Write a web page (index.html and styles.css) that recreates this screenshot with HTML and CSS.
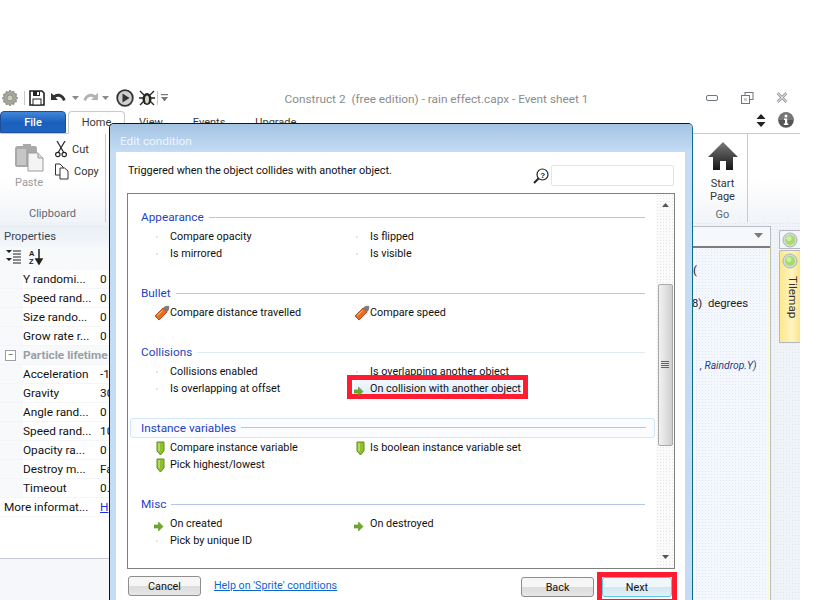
FILE: index.html
```html
<!DOCTYPE html>
<html lang="en">
<head>
<meta charset="utf-8">
<title>Construct 2</title>
<link rel="stylesheet" href="styles.css">
</head>
<body>
<svg class="defs" width="0" height="0" aria-hidden="true">
  <symbol id="dot" viewBox="0 0 16 16"><rect x="2" y="7" width="2" height="2" fill="#e4e4e4"/></symbol>
  <symbol id="bullet" viewBox="0 0 16 16">
    <path d="M1 11 L9 3 L13 7 L5 15 Z" fill="#e8701c" stroke="#c2451a" stroke-width="1"/>
    <path d="M9 3 Q11.500 0 15 1 Q16 4.500 13 7 Z" fill="#7d7d7d"/>
    <path d="M3.500 10.500 L8.500 5.500" stroke="#f7c58a" stroke-width="1"/>
  </symbol>
  <symbol id="shield" viewBox="0 0 16 16">
    <path d="M1 1 H8 V10 L4.500 14 L1 10 Z" fill="#8fbf2f" stroke="#5e8f1c" stroke-width="1"/>
    <path d="M3 2 V10" stroke="#c4e26e" stroke-width="1.500"/>
  </symbol>
  <symbol id="arrow" viewBox="0 0 16 16">
    <path d="M0 6 H4.500 V3 L9 7.500 L4.500 12 V9 H0 Z" fill="#6fa82a" stroke="#5a8d1f" stroke-width=".6"/>
  </symbol>
  <symbol id="led" viewBox="0 0 16 16">
    <circle cx="8" cy="8" r="7" fill="#d3dcd9" stroke="#aab4b4"/>
    <circle cx="8" cy="8" r="5" fill="#a6dc6a"/>
    <circle cx="7" cy="6.500" r="2.500" fill="#cdf0a5"/>
  </symbol>
</svg>

<div class="app">
  <header class="titlebar">
    <div class="qat">
      <svg class="q-gear" width="18" height="18" viewBox="0 0 18 18"><path d="M9 1l1.500 2 2.300-.8.500 2.400 2.400.5-.8 2.300 2 1.500-2 1.500.8 2.300-2.400.5-.5 2.400-2.300-.8L9 17l-1.500-2-2.300.8-.5-2.400-2.400-.5.8-2.300-2-1.500 2-1.500-.8-2.300 2.400-.5.500-2.400 2.300.8z" fill="#a3a89c" stroke="#77796f" stroke-width=".7"/><circle cx="9" cy="9" r="3" fill="#c9ccbf" stroke="#85877c" stroke-width=".7"/></svg>
      <span class="q-sep"></span>
      <svg class="q-save" width="16" height="16" viewBox="0 0 16 16"><path d="M1 1 H13 L15 3 V15 H1 Z" fill="#fff" stroke="#222" stroke-width="1.600"/><rect x="4" y="1" width="7" height="5" fill="#222"/><rect x="8" y="2" width="2" height="3" fill="#fff"/><rect x="4" y="9" width="8" height="6" fill="#fff" stroke="#222"/></svg>
      <svg class="q-undo" width="16" height="12" viewBox="0 0 16 12"><path d="M1 1 V8 H8 L5.500 5.500 C8 4 11.500 4.500 13 9 L15.500 8 C14 2.500 8.500 0 3.800 3.200 Z" fill="#333"/></svg>
      <svg class="q-caret" width="7" height="4" viewBox="0 0 7 4"><path d="M0 0 H7 L3.500 4 Z" fill="#8a8a8a"/></svg>
      <svg class="q-redo" width="16" height="12" viewBox="0 0 16 12"><path d="M15 1 V8 H8 L10.500 5.500 C8 4 4.500 4.500 3 9 L.5 8 C2 2.500 7.500 0 12.200 3.200 Z" fill="#b4b4b4"/></svg>
      <svg class="q-caret2" width="7" height="4" viewBox="0 0 7 4"><path d="M0 0 H7 L3.500 4 Z" fill="#8a8a8a"/></svg>
      <svg class="q-play" width="18" height="18" viewBox="0 0 18 18"><circle cx="9" cy="9" r="7.800" fill="#cfcfcf" stroke="#333" stroke-width="1.800"/><path d="M6.500 4.500 L13.500 9 L6.500 13.500 Z" fill="#333"/></svg>
      <svg class="q-bug" width="18" height="18" viewBox="0 0 18 18"><path d="M2 2l4 4M16 2l-4 4M1 9h16M2 16l4-4M16 16l-4-4" stroke="#222" stroke-width="1.300"/><ellipse cx="9" cy="10" rx="4.500" ry="6" fill="#222"/><ellipse cx="9" cy="10.500" rx="2" ry="4" fill="#d8d8c0"/></svg>
      <span class="q-sep q-sep-b"></span>
      <svg class="q-more" width="7" height="8" viewBox="0 0 7 8"><rect y="0" width="7" height="1.200" fill="#777"/><path d="M0 3 H7 L3.500 7.500 Z" fill="#777"/></svg>
    </div>
    <div class="wintitle">Construct 2&nbsp; (free edition) - rain effect.capx - Event sheet 1</div>
    <div class="winctl">
      <svg width="12" height="8" viewBox="0 0 12 8"><rect x=".5" y="1.500" width="11" height="5" rx="1.500" fill="#fff" stroke="#6d7580"/></svg>
      <svg width="13" height="12" viewBox="0 0 13 12"><rect x="4" y=".5" width="8" height="7" fill="#fff" stroke="#6d7580"/><rect x=".5" y="3.500" width="8" height="8" fill="#fff" stroke="#6d7580"/><rect x="3" y="6" width="3" height="3" fill="#c8ccd2"/></svg>
      <svg width="12" height="11" viewBox="0 0 12 11"><path d="M1.500 1 L10.500 10 M10.500 1 L1.500 10" stroke="#8f96a0" stroke-width="2.600"/><path d="M1.500 1 L10.500 10 M10.500 1 L1.500 10" stroke="#fff" stroke-width="1"/></svg>
    </div>
  </header>

  <nav class="tabs">
    <div class="tab tab-file">File</div>
    <div class="tab tab-home">Home</div>
    <div class="tab tab-plain tab-first">View</div>
    <div class="tab tab-plain">Events</div>
    <div class="tab tab-plain">Upgrade</div>
    <div class="tabs-right">
      <svg width="10" height="13" viewBox="0 0 10 13"><path d="M5 0 L9.500 5 H.5 Z M.5 8 H9.500 L5 13 Z" fill="#222"/></svg>
      <svg width="16" height="16" viewBox="0 0 16 16"><circle cx="8" cy="8" r="7.800" fill="#555"/><path d="M8 .3 A7.700 7.700 0 0 1 15.700 8 H.3 A7.700 7.700 0 0 1 8 .3" fill="#777"/><circle cx="8" cy="4" r="1.500" fill="#fff"/><path d="M6 6.500 H9.200 V11.500 H10.300 V13 H5.800 V11.500 H7 V8 H6 Z" fill="#fff"/></svg>
    </div>
  </nav>

  <section class="ribbon">
    <div class="group group-clip">
      <div class="clip-tools">
        <div class="paste">
          <svg width="30" height="31" viewBox="0 0 30 31"><path d="M9 3 H17 V5 H21 Q23 5 23 8 V26 H3 Q1 26 1 24 V8 Q1 5 4 5 H9 Z" fill="#a9a9a9"/><path d="M3 8 H12 V24 H3 Z" fill="#c6c6c6"/><path d="M14 12 H24 L29 17 V30 H14 Z" fill="#f4f4f4" stroke="#9c9c9c"/><path d="M24 12 V17 H29" fill="#d8d8d8" stroke="#9c9c9c"/></svg>
          <span>Paste</span>
        </div>
        <div class="clip-side">
          <div class="clip-row">
            <svg width="12" height="17" viewBox="0 0 12 17"><path d="M2 0 L8.500 11 M10 0 L3.500 11" stroke="#222" stroke-width="1.200"/><circle cx="2.800" cy="13.500" r="2.200" fill="none" stroke="#222" stroke-width="1.200"/><circle cx="9.200" cy="13.500" r="2.200" fill="none" stroke="#222" stroke-width="1.200"/></svg>
            <span>Cut</span>
          </div>
          <div class="clip-row">
            <svg width="14" height="17" viewBox="0 0 14 17"><path d="M.5 1 H5 L8 4 V12 H.5 Z" fill="#fff" stroke="#333"/><path d="M5 5 H9.500 L13 8 V16 H5 Z" fill="#fff" stroke="#333"/></svg>
            <span>Copy</span>
          </div>
        </div>
      </div>
      <div class="group-name">Clipboard</div>
    </div>
    <div class="ribbon-mid"></div>
    <div class="group group-go">
      <div class="go-tool">
        <svg width="30" height="28" viewBox="0 0 30 28"><defs><linearGradient id="homeg" x1="0" y1="0" x2="0" y2="1"><stop offset="0" stop-color="#7a7a7a"/><stop offset="1" stop-color="#161616"/></linearGradient></defs><path d="M15 0 L30 15 H25 V28 H18 V19 H12 V28 H5 V15 H0 Z" fill="url(#homeg)"/></svg>
        <span>Start<br>Page</span>
      </div>
      <div class="group-name">Go</div>
    </div>
    <div class="ribbon-end"></div>
  </section>

  <main class="work">
    <aside class="props">
      <div class="props-head">Properties</div>
      <div class="props-tools">
        <svg width="15" height="14" viewBox="0 0 15 14"><path d="M0 0 H6 L3 3 Z M0 8 H6 L3 11 Z" fill="#222"/><path d="M7 1 H15 M7 4 H15 M7 7 H15 M7 10 H15 M7 13 H15" stroke="#222" stroke-width="1"/></svg>
        <svg width="15" height="16" viewBox="0 0 15 16"><path d="M11 0 V13 M8 10 L11 15 L14 10 Z" stroke="#222" fill="#222" stroke-width="1.500"/><text x="1" y="6.500" class="az">A</text><text x="1" y="15" class="az">Z</text></svg>
      </div>
      <div class="prow"><span class="pn">Y randomi...</span><span class="pv">0</span></div>
      <div class="prow"><span class="pn">Speed rand...</span><span class="pv">0</span></div>
      <div class="prow"><span class="pn">Size rando...</span><span class="pv">0</span></div>
      <div class="prow"><span class="pn">Grow rate r...</span><span class="pv">0</span></div>
      <div class="prow pcat"><span class="pbox">&minus;</span><span>Particle lifetime</span></div>
      <div class="prow"><span class="pn">Acceleration</span><span class="pv pv-neg">-1</span></div>
      <div class="prow"><span class="pn">Gravity</span><span class="pv">30</span></div>
      <div class="prow"><span class="pn">Angle rand...</span><span class="pv">0</span></div>
      <div class="prow"><span class="pn">Speed rand...</span><span class="pv">10</span></div>
      <div class="prow"><span class="pn">Opacity ra...</span><span class="pv">0</span></div>
      <div class="prow"><span class="pn">Destroy m...</span><span class="pv">Fa</span></div>
      <div class="prow"><span class="pn">Timeout</span><span class="pv">0.</span></div>
      <div class="prow pmore"><span class="pn">More informat...</span><a class="pv plink">H</a></div>
      <div class="props-fill"></div>
      <div class="props-low"></div>
    </aside>
    <div class="center"></div>
    <div class="rightside">
      <div class="sheet">
        <div class="combo"><svg width="9" height="5" viewBox="0 0 9 5"><path d="M0 0 H9 L4.500 5 Z" fill="#7c7c7c"/></svg></div>
        <div class="sheet-body">
          <div class="sl sl-1">(</div>
          <div class="sl sl-2">8)&nbsp; degrees</div>
          <div class="sl sl-3">, Raindrop.Y)</div>
        </div>
      </div>
      <div class="rail">
        <div class="rail-tab"><svg width="16" height="16"><use href="#led"/></svg></div>
        <div class="rail-tab rail-tab-y"><svg width="16" height="16"><use href="#led"/></svg><span>Tilemap</span></div>
      </div>
    </div>
  </main>
</div>

<div class="dialog">
  <div class="dlg-title">Edit condition</div>
  <div class="dlg-inner">
    <div class="dlg-top">
      <p class="dlg-desc">Triggered when the object collides with another object.</p>
      <svg class="dlg-mag" width="16" height="16" viewBox="0 0 16 16"><circle cx="9.500" cy="6.500" r="5.500" fill="#fff" stroke="#222" stroke-width="1.200"/><path d="M5.500 10.500 L1 15" stroke="#222" stroke-width="2"/><text x="7.300" y="9.500" class="magq">?</text></svg>
      <div class="dlg-search"></div>
    </div>
    <div class="listbox">
      <div class="list-main">
        <section class="sect">
          <h3 class="sect-h"><span>Appearance</span></h3>
          <div class="items">
            <div class="item"><svg class="ic"><use href="#dot"/></svg>Compare opacity</div>
            <div class="item"><svg class="ic"><use href="#dot"/></svg>Is flipped</div>
            <div class="item"><svg class="ic"><use href="#dot"/></svg>Is mirrored</div>
            <div class="item"><svg class="ic"><use href="#dot"/></svg>Is visible</div>
          </div>
        </section>
        <section class="sect">
          <h3 class="sect-h"><span>Bullet</span></h3>
          <div class="items">
            <div class="item"><svg class="ic"><use href="#bullet"/></svg>Compare distance travelled</div>
            <div class="item"><svg class="ic"><use href="#bullet"/></svg>Compare speed</div>
          </div>
        </section>
        <section class="sect">
          <h3 class="sect-h sect-h-pale"><span>Collisions</span></h3>
          <div class="items">
            <div class="item"><svg class="ic"><use href="#dot"/></svg>Collisions enabled</div>
            <div class="item"><svg class="ic"><use href="#dot"/></svg>Is overlapping another object</div>
            <div class="item"><svg class="ic"><use href="#dot"/></svg>Is overlapping at offset</div>
            <div class="item item-sel"><svg class="ic ic-low"><use href="#arrow"/></svg><span>On collision with another object</span></div>
          </div>
        </section>
        <section class="sect">
          <h3 class="sect-h sect-h-hot"><span>Instance variables</span></h3>
          <div class="items">
            <div class="item"><svg class="ic ic-shield"><use href="#shield"/></svg>Compare instance variable</div>
            <div class="item"><svg class="ic ic-shield"><use href="#shield"/></svg>Is boolean instance variable set</div>
            <div class="item"><svg class="ic ic-shield"><use href="#shield"/></svg>Pick highest/lowest</div>
          </div>
        </section>
        <section class="sect">
          <h3 class="sect-h"><span>Misc</span></h3>
          <div class="items">
            <div class="item"><svg class="ic ic-low"><use href="#arrow"/></svg>On created</div>
            <div class="item"><svg class="ic ic-low"><use href="#arrow"/></svg>On destroyed</div>
            <div class="item"><svg class="ic"><use href="#dot"/></svg>Pick by unique ID</div>
          </div>
        </section>
      </div>
      <div class="scroll">
        <svg class="sc-up" width="7" height="4" viewBox="0 0 7 4"><path d="M3.500 0 L7 4 H0 Z" fill="#555"/></svg>
        <div class="sc-thumb"><svg width="8" height="8" viewBox="0 0 8 8"><path d="M0 .5 H8 M0 2.500 H8 M0 4.500 H8 M0 6.500 H8" stroke="#666"/></svg></div>
        <svg class="sc-down" width="7" height="4" viewBox="0 0 7 4"><path d="M0 0 H7 L3.500 4 Z" fill="#555"/></svg>
      </div>
    </div>
    <div class="dlg-foot">
      <button class="btn btn-cancel">Cancel</button>
      <a class="help">Help on 'Sprite' conditions</a>
      <span class="foot-gap"></span>
      <button class="btn btn-back">Back</button>
      <button class="btn btn-next">Next</button>
    </div>
  </div>
</div>
</body>
</html>
```
FILE: styles.css
```css
* { box-sizing: border-box; }
html, body { margin: 0; padding: 0; height: 600px; overflow: hidden; background: #fff; }
body { position: relative; font-family: Roboto, "Noto Sans", sans-serif; font-size: 10.800px; color: #111; }
.defs { position: absolute; }

.app { width: 800px; height: 518px; margin-top: 82px; display: flex; flex-direction: column; background: #fff; overflow: hidden; }

.titlebar { height: 29px; display: flex; align-items: center; flex: none; padding-top: 2px; }
.qat { width: 200px; display: flex; align-items: center; flex: none; padding-left: 1px; }
.q-sep { width: 1px; height: 14px; background: #c8c8c8; margin-left: 5px; }
.q-save { margin-left: 4px; }
.q-undo { margin-left: 5px; }
.q-caret { margin-left: 6px; }
.q-redo { margin-left: 4px; }
.q-caret2 { margin-left: 3px; }
.q-play { margin-left: 7px; }
.q-bug { margin-left: 4px; }
.q-sep-b { margin-left: 1px; }
.q-more { margin-left: 3px; }
.wintitle { width: 473px; text-align: center; color: #8c8c8c; font-size: 11.800px; white-space: nowrap; padding-top: 2px; }
.winctl { flex: 1; display: flex; align-items: center; justify-content: space-between; padding: 0 12px 0 33px; }

.tabs { height: 23px; display: flex; align-items: flex-end; flex: none; position: relative; border-bottom: 1px solid #c6cbd1; }
.tab { height: 22px; display: flex; align-items: center; justify-content: center; font-size: 11px; color: #3a3a3a; }
.tab-file { width: 66px; background: linear-gradient(#3f86dc, #1a5fb8 55%, #1d64c4); color: #fff; font-weight: 500; border-radius: 4px 4px 0 0; border: 1px solid #1b4f9e; }
.tab-home { width: 57px; height: 23px; margin-left: 2px; background: #fff; border: 1px solid #c6cbd1; border-bottom: 1px solid #fff; border-radius: 4px 4px 0 0; margin-bottom: -1px; }
.tab-plain { padding: 0 15px; }
.tab-first { margin-left: -1px; }
.tabs-right { margin-left: auto; display: flex; align-items: center; gap: 12px; padding: 0 6px 5px 0; }

.ribbon { height: 88px; display: flex; flex: none; background: linear-gradient(#fff 50%, #f1f4f8); }
.group { display: flex; flex-direction: column; border-right: 1px solid #c8ccd2; }
.group-clip { width: 106px; }
.clip-tools { flex: 1; display: flex; padding: 7px 0 0 14px; }
.paste { width: 30px; display: flex; flex-direction: column; align-items: center; color: #9a9a9a; font-size: 11px; gap: 3px; }
.paste span { line-height: 15px; }
.clip-side { display: flex; flex-direction: column; gap: 5px; margin-left: 11px; }
.clip-row { display: flex; align-items: center; gap: 5px; height: 17px; font-size: 11px; color: #333; }
.group-name { height: 20px; text-align: center; font-size: 11px; color: #5d6a78; line-height: 23px; }
.ribbon-mid { width: 592px; flex: none; }
.group-go { width: 50px; flex: none; }
.go-tool { flex: 1; display: flex; flex-direction: column; align-items: center; padding-top: 8px; font-size: 11px; line-height: 13px; text-align: center; color: #333; gap: 7px; }
.ribbon-end { flex: 1; }

.work { flex: 1; display: flex; min-height: 0; background: #f2f5f9; }
.props { width: 110px; flex: none; display: flex; flex-direction: column; background: #fff; border-top: 3px solid #eef2f6; overflow: hidden; }
.props-head { height: 22px; flex: none; padding-left: 4px; line-height: 23px; color: #36465a; font-size: 11.300px; background: linear-gradient(#e9eef4, #f4f7fa); }
.props-tools { height: 23px; flex: none; display: flex; align-items: center; gap: 7px; padding: 0 0 4px 6px; background: #f7f9fb; }
.az { font: 700 7.500px "Liberation Sans", sans-serif; fill: #222; }
.prow { height: 19px; flex: none; display: flex; align-items: center; white-space: nowrap; padding-left: 23px; border-bottom: 1px solid #f3f5f8; font-size: 11.800px; background: linear-gradient(90deg, #f7f9fb 23px, #fff 23px); }
.pn { width: 77px; flex: none; overflow: hidden; }
.pv { flex: none; }
.pcat { padding-left: 5px; color: #9a9fa6; font-weight: 700; background: #f7f9fb; }
.pbox { width: 11px; height: 11px; border: 1px solid #9aa0a8; display: flex; align-items: center; justify-content: center; font-size: 10px; line-height: 1; margin-right: 7px; color: #666; background: #fff; font-weight: 400; flex: none; }
.pmore { padding-left: 4px; background: #fff; }
.pmore .pn { width: 96px; }
.plink { color: #1a2fe0; text-decoration: underline; }
.props-fill { height: 42px; flex: none; background: #fff; border-bottom: 1px solid #c6cbd1; }
.props-low { flex: 1; background: #f5f7fa; }
.center { width: 582px; flex: none; }
.rightside { flex: 1; display: flex; min-width: 0; background-color: #f0f3f8; background-image: radial-gradient(#dfe5ee .6px, transparent .7px); background-size: 3px 3px; padding-top: 4px; }
.sheet { width: 79px; flex: none; display: flex; flex-direction: column; border-right: 1px solid #b9bec5; }
.combo { height: 22px; flex: none; display: flex; justify-content: flex-end; align-items: center; padding: 0 7px 2px 0; border-top: 1px solid #b9bec5; background: #f6f8fb; border-bottom: 2px solid #7d7d7d; }
.sheet-body { flex: 1; background-color: #f4f8fe; background-image: radial-gradient(#dce8f6 .6px, transparent .7px); background-size: 3px 3px; border-right: 2px solid #fbfbd2; white-space: nowrap; overflow: hidden; font-size: 11.300px; padding-top: 15px; }
.sl { height: 16px; line-height: 16px; }
.sl-1 { margin-left: 1px; }
.sl-2 { margin-top: 17px; color: #222; }
.sl-3 { margin-top: 46px; margin-left: 8px; font-size: 10.300px; font-style: italic; color: #2a3a80; }
.rail { flex: 1; padding: 4px 0 0 8px; }
.rail-tab { height: 19px; border: 1px solid #b5b8bd; border-right: 0; padding: 1px 0 0 2px; background: #f4f6f9; border-radius: 2px 0 0 0; }
.rail-tab-y { height: 93px; margin-top: 1px; display: flex; flex-direction: column; background: linear-gradient(90deg, #fde88f, #fff4c0 60%, #fbe48c); padding-top: 2px; }
.rail-tab-y span { writing-mode: vertical-rl; font-size: 11.800px; margin: 7px 0 0 2px; color: #333; }

.dialog { position: absolute; left: 109px; top: 123px; width: 584px; height: 490px; display: flex; flex-direction: column; border: 1px solid #10181f; border-right-color: #0f6f84; border-radius: 5px 5px 0 0; background: #c4dcf5; overflow: hidden; }
.dlg-title { height: 28px; flex: none; padding: 4px 0 0 10px; line-height: 26px; font-size: 11.800px; color: #eef5fc; background: linear-gradient(#a4c3e2, #c4dcf5); }
.dlg-inner { margin: 0 7px 0 6px; flex: 1; background: #fff; display: flex; flex-direction: column; padding: 0 10px 0 11px; }
.dlg-top { height: 41px; flex: none; display: flex; align-items: flex-start; position: relative; }
.dlg-desc { margin: 11px 0 0 1px; font-size: 10.900px; line-height: 16px; width: 405px; flex: none; }
.dlg-mag { margin-top: 16px; flex: none; }
.dlg-search { width: 123px; height: 21px; margin: 13px 0 0 2px; border: 1px solid #dfe6ee; border-radius: 2px; background: #fff; }
.magq { font: 700 8px "Liberation Sans", sans-serif; fill: #222; }

.listbox { height: 376px; flex: none; display: flex; border: 1px solid #7f7f7f; overflow: hidden; }
.list-main { flex: 1; padding: 13px 0 0 2px; min-width: 0; }
.sect { margin-bottom: 21px; }
.sect-h { height: 21px; margin: 0 1px 0 0; padding: 0 10px 0 11px; display: flex; align-items: center; gap: 5px; font-weight: 400; font-size: 11.800px; color: #1f3fbf; white-space: nowrap; line-height: 19px; }
.sect-h::after { content: ""; flex: 1; height: 1px; background: #b3c6e6; margin-top: -1px; }
.sect-h-pale::after { background: #e2eaf4; }
.sect-h-hot { height: 20px; margin-bottom: 1px; border: 1px solid #d5e6f8; border-radius: 3px; padding: 0 8px 0 10px; background: #fafcff; }
.items { display: grid; grid-template-columns: 200px 200px; grid-auto-rows: 17px; padding-left: 24px; }
.item { display: flex; align-items: center; font-size: 10.800px; white-space: nowrap; color: #111; height: 17px; }
.ic { width: 16px; height: 16px; flex: none; }
.ic-low { position: relative; top: 3px; }
.ic-shield { position: relative; top: 1px; transform: translateX(2px); }
.item-sel { position: relative; z-index: 1; width: 168px; background: linear-gradient(#f4f9ff, #d6ebfc); }
.item-sel::before { content: ""; position: absolute; left: -7px; top: -5px; width: 171px; height: 14px; border: 5px solid #ff1c30; pointer-events: none; }
.scroll { width: 18px; flex: none; display: flex; flex-direction: column; align-items: center; background-color: #fbfbfb; background-image: radial-gradient(#e6e6e6 .6px, transparent .7px); background-size: 3px 3px; }
.sc-up { margin-top: 9px; flex: none; }
.sc-thumb { margin-top: 77px; width: 15px; height: 162px; flex: none; border: 1px solid #a8a8a8; border-radius: 2px; background: linear-gradient(90deg, #f2f2f2, #cfcfcf); display: flex; align-items: center; justify-content: center; }
.sc-down { margin-top: 109px; flex: none; }

.dlg-foot { height: 30px; flex: none; display: flex; align-items: flex-start; padding-top: 7px; }
.btn { height: 20px; width: 73px; padding: 0; font: 10.800px Roboto, sans-serif; color: #111; border: 1px solid #8e8e8e; border-radius: 3px; background: linear-gradient(#f6f6f6 50%, #dcdcdc 50%, #e6e6e6); line-height: 17px; }
.btn-cancel { margin-left: 1px; }
.help { margin-left: 13px; font-size: 10.700px; color: #0d66d0; text-decoration: underline; line-height: 19px; }
.foot-gap { flex: 1; }
.btn-back { margin-top: 1px; }
.btn-next { margin: 1px 3px 0 8px; width: 70px; position: relative; border-color: #5cc8e8; background: linear-gradient(#eef7fc 50%, #d3e6f0 50%, #e2f1f8); }
.btn-next::before { content: ""; position: absolute; inset: -6px -6px -8px -6px; border: 5px solid #ff1c30; }
```
